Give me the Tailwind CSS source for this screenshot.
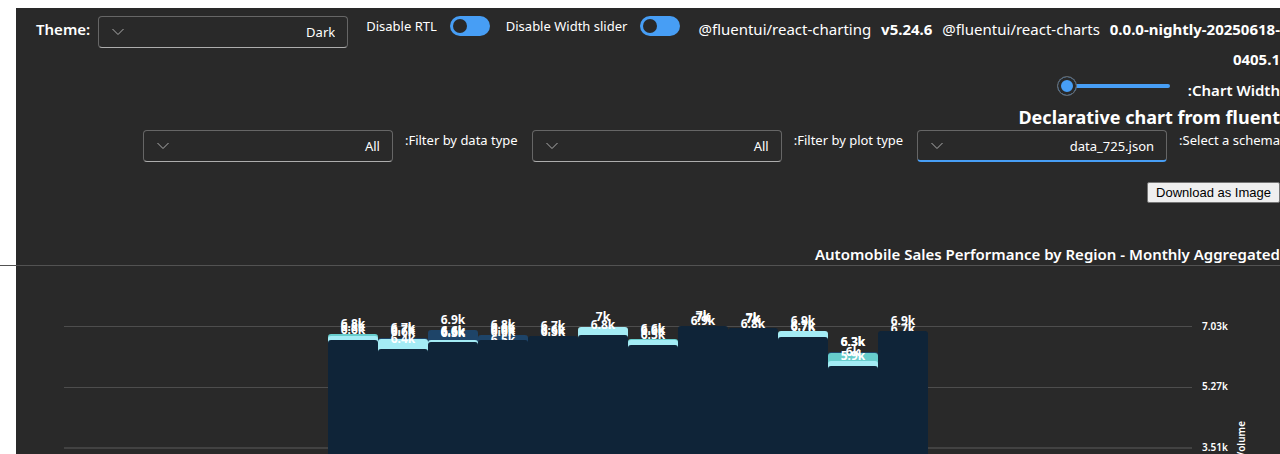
<!DOCTYPE html>
<html lang="en">
<head>
<meta charset="utf-8">
<title>Declarative chart from fluent</title>
<script src="https://cdn.jsdelivr.net/npm/@tailwindcss/browser@4"></script>
</head>
<body class="h-screen overflow-hidden bg-white pt-2 pl-4 font-['Segoe_UI','Noto_Sans',sans-serif] text-white">
<main class="flex h-full flex-col bg-[#292929]">
  <header class="flex items-start pt-2 pl-5">
    <label for="theme" class="mr-2 text-[15px] leading-[26px] font-semibold">Theme:</label>
    <div class="relative mr-[18px] shrink-0">
      <select id="theme" dir="rtl" class="block h-8 w-[250px] appearance-none rounded border border-[#666] border-b-[#adadad] bg-[#292929] px-3 pt-0.5 text-[13px]"><option>Dark</option></select>
      <svg class="pointer-events-none absolute top-3 left-[14px] h-2 w-3" viewBox="0 0 12 8" fill="none" stroke="#adadad"><path d="M.5 1 6 6.5 11.5 1"/></svg>
    </div>
    <div class="mr-4 flex shrink-0 items-center gap-[13px]">
      <label for="rtl" class="text-[13px] leading-5">Disable RTL</label>
      <input id="rtl" type="checkbox" role="switch" checked class="h-5 w-10 appearance-none rounded-full bg-[#479ef5] p-[3px] before:block before:size-[14px] before:rounded-full before:bg-[#292929]">
    </div>
    <div class="mr-4 flex shrink-0 items-center gap-[13px]">
      <label for="wslider" class="text-[13px] leading-5">Disable Width slider</label>
      <input id="wslider" type="checkbox" role="switch" checked class="h-5 w-10 appearance-none rounded-full bg-[#479ef5] p-[3px] before:block before:size-[14px] before:rounded-full before:bg-[#292929]">
    </div>
    <p class="-mt-0.5 min-w-0 flex-1 text-right text-[15px] leading-[30px]"><span class="mr-1.5">@fluentui/react-charting</span> <b class="mr-1.5 font-bold">v5.24.6</b> <span class="mr-1.5">@fluentui/react-charts</span> <b class="font-bold">0.0.0-nightly-20250618-0405.1</b></p>
  </header>
  <div class="flex items-start justify-end gap-[18px]">
    <input id="cw" type="range" min="0" max="100" value="0" class="mt-0.5 h-5 w-[113px] appearance-none bg-transparent [&::-webkit-slider-runnable-track]:h-1 [&::-webkit-slider-runnable-track]:rounded-full [&::-webkit-slider-runnable-track]:bg-[#479ef5] [&::-webkit-slider-thumb]:-mt-2 [&::-webkit-slider-thumb]:size-5 [&::-webkit-slider-thumb]:appearance-none [&::-webkit-slider-thumb]:rounded-full [&::-webkit-slider-thumb]:border [&::-webkit-slider-thumb]:border-[#666] [&::-webkit-slider-thumb]:bg-[#479ef5] [&::-webkit-slider-thumb]:ring-3 [&::-webkit-slider-thumb]:ring-[#292929] [&::-webkit-slider-thumb]:ring-inset">
    <label for="cw" class="text-[15px] leading-8 font-semibold">:Chart Width</label>
  </div>
  <h1 class="pb-0.5 text-right text-[18px] leading-[22px] font-bold">Declarative chart from fluent</h1>
  <div class="flex items-start justify-end gap-3 text-[13px]">
    <div class="relative shrink-0">
      <select id="dt" dir="rtl" class="block h-8 w-[250px] appearance-none rounded border border-[#666] border-b-[#adadad] bg-[#292929] px-3 pt-0.5"><option>All</option></select>
      <svg class="pointer-events-none absolute top-3 left-[14px] h-2 w-3" viewBox="0 0 12 8" fill="none" stroke="#adadad"><path d="M.5 1 6 6.5 11.5 1"/></svg>
    </div>
    <label for="dt" class="leading-5">:Filter by data type</label>
    <div class="relative ml-0.5 shrink-0">
      <select id="pt" dir="rtl" class="block h-8 w-[250px] appearance-none rounded border border-[#666] border-b-[#adadad] bg-[#292929] px-3 pt-0.5"><option>All</option></select>
      <svg class="pointer-events-none absolute top-3 left-[14px] h-2 w-3" viewBox="0 0 12 8" fill="none" stroke="#adadad"><path d="M.5 1 6 6.5 11.5 1"/></svg>
    </div>
    <label for="pt" class="leading-5">:Filter by plot type</label>
    <div class="relative ml-0.5 shrink-0">
      <select id="sc" dir="rtl" class="block h-8 w-[250px] appearance-none rounded border border-b-2 border-[#666] border-b-[#479ef5] bg-[#292929] px-3 pt-0.5"><option>data_725.json</option></select>
      <svg class="pointer-events-none absolute top-3 left-[14px] h-2 w-3" viewBox="0 0 12 8" fill="none" stroke="#adadad"><path d="M.5 1 6 6.5 11.5 1"/></svg>
    </div>
    <label for="sc" class="leading-5">:Select a schema</label>
  </div>
  <button type="button" class="mt-5 self-end rounded-xs border border-[#767676] bg-[#efefef] px-2 font-['Liberation_Sans',sans-serif] text-[13px] leading-[19px] text-black">Download as Image</button>
  <h2 class="mt-10 text-right text-[15px] leading-[22px] font-semibold">Automobile Sales Performance by Region - Monthly Aggregated</h2>
  <hr class="-ml-4 border-[#525252]">
  <svg id="chart" class="w-full overflow-visible" viewBox="16 266 1264 188" fill="#fff" role="img" aria-label="Monthly sales volume by region">
    <g fill="#4d4d4d"><path d="M64 326h1128v1H64zM64 387h1128v1H64z"/><path fill="#424242" d="M64 447h1128v2H64z"/></g>
    <g class="text-[10px] font-semibold">
      <text x="1202" y="330">7.03k</text><text x="1202" y="390">5.27k</text><text x="1202" y="451">3.51k</text>
      <text transform="translate(1245 421) rotate(-90)" text-anchor="end">Sales Volume</text>
    </g>
    <g id="bars" class="text-[12px] font-bold" text-anchor="middle"></g>
  </svg>
</main>
<script>
const C = {b: '#1e4468', t: '#67cdcc', l: '#a4ecf5', n: '#0f2438'};
// Every column is painted in order: [color key, top] is a bar, [label, baseline] is a value label.
const columns = [
  [['t',334],['6.8k',328],['6.8k',331],['l',336],['6.6k',334],['n',340]],
  [['b',338],['6.7k',332],['6.7k',334],['6.6k',336],['l',339],['6.4k',343],['n',349]],
  [['b',330],['6.9k',324],['l',340],['6.6k',335],['6.6k',336],['6.5k',337],['n',342]],
  [['b',335],['6.8k',329],['6.6k',332],['6.6k',334],['6.6k',336],['6.5k',344],['n',340]],
  [['6.7k',330],['6.6k',334],['6.5k',336],['n',336]],
  [['7k',321],['l',327],['6.8k',329],['n',335]],
  [['t',339],['6.6k',333],['6.6k',335],['l',340],['6.5k',339],['n',345]],
  [['7k',320],['7k',322],['6.9k',325],['n',326]],
  [['7k',322],['7k',323],['6.8k',328],['n',328]],
  [['6.9k',325],['6.7k',330],['6.7k',331],['l',331],['n',337]],
  [['b',352],['6.3k',346],['6.3k',346],['t',353],['6k',356],['l',361],['5.9k',360],['n',366]],
  [['6.9k',325],['6.7k',333],['n',331]]
];
document.getElementById('bars').innerHTML = columns.map((items, i) => {
  const x = 328 + i * 50;
  return items.map(([k, y]) => C[k]
    ? `<path fill="${C[k]}" d="M${x} 460V${y + 3}q0-3 3-3h44q3 0 3 3V460z"/>`
    : `<text x="${x + 25}" y="${y}">${k}</text>`).join('');
}).join('');
</script>
</body>
</html>
